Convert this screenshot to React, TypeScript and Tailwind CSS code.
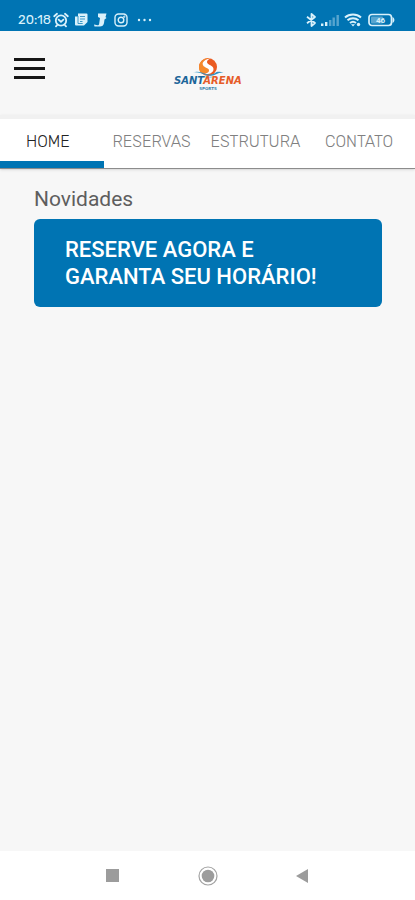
import React, { useState } from 'react'

const tabs = ['HOME', 'RESERVAS', 'ESTRUTURA', 'CONTATO']

function StatusBar() {
  return (
    <div className="flex h-[31px] items-center justify-between bg-[#0074b3] pt-2 pr-5 pl-[18px] text-[#d9f1fb]">
      <div className="flex items-center">
        <span className="font-['Rubik','Roboto',sans-serif] text-[13px] leading-4">20:18</span>
        <svg className="ml-[2px] h-4 w-4" viewBox="0 0 16 16" fill="none" stroke="currentColor" strokeWidth="1.8" strokeLinecap="round">
          <circle cx="8" cy="8.5" r="5.2" />
          <path d="M1.2 4.2 4 1.8M14.8 4.2 12 1.8M4.2 13 3 14.4M11.8 13l1.2 1.4M5.6 7.6 8 9.8l2.4-2.2" />
        </svg>
        <svg className="ml-1 h-4 w-4" viewBox="0 0 16 16">
          <path d="M5 1.5h8.500a1 1 0 0 1 1 1v7.500l-3.500 3.500H3a1 1 0 0 1-1-1v-8h3z" fill="currentColor" />
          <path d="M5 4v7.500h4.700M7 4.500h5M7 7h5M7 9.500h2.500" stroke="#2b8fc2" strokeWidth="0.9" fill="none" />
        </svg>
        <svg className="ml-1 h-4 w-4" viewBox="0 0 16 16" fill="currentColor">
          <path d="M5 1.500h8.500L12.500 5l1 1-2 1.500-.5 3.500c-.3 2.500-2 3.500-4 3.500L1.500 14.500l-.5-2 3.500.8c1.200 0 1.700-.8 1.700-1.800L7 6 5 5z" />
        </svg>
        <svg className="ml-1 h-4 w-4" viewBox="0 0 16 16" fill="none" stroke="currentColor" strokeWidth="1.4">
          <rect x="2" y="2" width="12" height="12" rx="3.5" />
          <circle cx="8" cy="8" r="2.8" />
          <circle cx="11.3" cy="4.7" r="0.4" />
        </svg>
        <svg className="ml-2 h-4 w-4" viewBox="0 0 16 16" fill="currentColor">
          <circle cx="2" cy="8" r="1.2" />
          <circle cx="7.500" cy="8" r="1.2" />
          <circle cx="13" cy="8" r="1.2" />
        </svg>
      </div>
      <div className="flex items-center">
        <svg className="h-4 w-4" viewBox="0 0 16 16" fill="none" stroke="currentColor" strokeWidth="1.8" strokeLinejoin="round">
          <path d="m3 4.800 8 6.200L7.500 14V2L11 5 3 11.200" />
        </svg>
        <svg className="h-4 w-5" viewBox="0 0 20 16" fill="currentColor">
          <rect x="1" y="11.500" width="2.400" height="2.500" />
          <rect x="5" y="10" width="2.400" height="4" />
          <path d="M9 8h2.400v6H9zM12.500 5.500h2.400V14h-2.400zM16.500 3h2.400v11h-2.400z" opacity="0.4" />
        </svg>
        <svg className="ml-1 h-4 w-[18px]" viewBox="0 0 18 16" fill="none" stroke="currentColor" strokeWidth="2">
          <path d="M1 5.500c4.500-4 11.500-4 16 0M3.500 8.300c3.200-2.800 7.800-2.800 11 0M6 11c1.800-1.500 4.200-1.500 6 0" />
          <path d="m9 14.500-2-2.300h4z" fill="currentColor" stroke="none" />
          <circle cx="14.500" cy="12.500" r="1.700" fill="currentColor" stroke="none" />
        </svg>
        <svg className="ml-[6px] h-4 w-[27px]" viewBox="0 0 27 16">
          <rect x="1" y="2.500" width="22.500" height="11" rx="3" fill="none" stroke="currentColor" strokeWidth="1.7" />
          <path d="M24.500 5c2.500 1 2.500 5 0 6z" fill="currentColor" />
          <rect x="3" y="4.500" width="12" height="7" rx="1" fill="currentColor" opacity="0.4" />
          <text x="12.500" y="10.800" fontSize="8" fontWeight="700" textAnchor="middle" fill="currentColor" fontFamily="Roboto, sans-serif">46</text>
        </svg>
      </div>
    </div>
  )
}

function Logo() {
  return (
    <svg className="h-12 w-20" viewBox="0 -12 80 48" role="img" aria-label="Santarena Sports">
      <circle cx="40" cy="11" r="9" fill="#ea5b22" />
      <path d="M42 2c-6-.5-11 4-11 9 0 2 .5 4 1.500 5.500 4 1.500 8 .5 8.500-2 .5-2.700-5-2.700-6-5.500-1-3 2.500-6 7-7z" fill="#f58a2c" />
      <path d="M43 2.300c-6 .7-9.500 4-8 7 1.300 2.800 6.500 2.500 6 5.500-.3 1.800-2.500 2.700-5 3.200 5 .8 9.500-1 9.500-5 0-3.800-6-3.700-6.500-6.700-.2-1.700 1.500-3 4-4z" fill="#fff" />
      <path d="M25 16.500c5-2 9 .5 13 1.500s7 .5 9-1 4-1.500 8.500-.5c-3.500.2-5.500.7-8 2-3 1.600-6.500 1.500-10.500.3-4-1.400-7-3-12-2.300z" fill="#2f93c6" />
      <path d="M32 20.500c4-.5 7 1.500 12 .5" stroke="#7cc0de" fill="none" />
      <text x="6" y="28" fontSize="10" fontWeight="700" fontStyle="italic" fontFamily="'DejaVu Sans', sans-serif" fill="#1d669a">
        SANT<tspan fill="#e65c29">ARENA</tspan>
      </text>
      <text x="40" y="34" fontSize="4" fontWeight="700" textAnchor="middle" fontFamily="'DejaVu Sans', sans-serif" fill="#3b86ae">SPORTS</text>
    </svg>
  )
}

function Header() {
  return (
    <header className="grid h-[84px] grid-cols-[1fr_auto_1fr] items-center px-[14px] pb-[10px]">
      <button type="button" aria-label="Menu" className="flex w-[31px] flex-col gap-[6px]">
        <span className="h-[3px] bg-[#161616]" />
        <span className="h-[3px] bg-[#161616]" />
        <span className="h-[3px] bg-[#161616]" />
      </button>
      <Logo />
    </header>
  )
}

export default function App() {
  const [active, setActive] = useState('HOME')

  return (
    <div className="flex min-h-screen flex-col bg-[#f7f7f7] font-['Rubik','Roboto',sans-serif]">
      <StatusBar />
      <Header />
      <nav className="grid h-[54px] grid-cols-4 border-t-4 border-b border-t-[#f1f1f1] border-b-[#8c8c8c] bg-white shadow-sm">
        {tabs.map(tab => (
          <button
            key={tab}
            type="button"
            onClick={() => setActive(tab)}
            className={`border-b-[7px] pt-1 pr-2 text-base leading-5 font-light ${
              active === tab ? 'border-[#0074b3] text-[#222222]' : 'border-transparent text-[#808080]'
            }`}
          >
            {tab}
          </button>
        ))}
      </nav>

      <main className="flex-1 pt-4 pr-[33px] pl-[34px] font-['Roboto',sans-serif]">
        <h2 className="text-[21px] leading-7 text-[#5e5e5e]">Novidades</h2>
        <a href="#reservas" className="mt-[6px] block rounded-md bg-[#0074b3] px-[31px] py-[17px] text-[22px] leading-[27px] font-medium text-white">
          RESERVE AGORA E<br />GARANTA SEU HORÁRIO!
        </a>
      </main>

      <footer className="flex h-[49px] items-center justify-center gap-[75px] bg-white">
        <button type="button" aria-label="Recentes">
          <svg className="h-5 w-5" viewBox="0 0 20 20" fill="#9c9c9c"><rect x="3" y="3" width="13" height="13" /></svg>
        </button>
        <button type="button" aria-label="Início">
          <svg className="h-5 w-5" viewBox="0 0 20 20">
            <circle cx="10" cy="10" r="9" fill="none" stroke="#a3a3a3" strokeWidth="1.2" />
            <circle cx="10" cy="10" r="6.3" fill="#9c9c9c" />
          </svg>
        </button>
        <button type="button" aria-label="Voltar">
          <svg className="h-5 w-5" viewBox="0 0 20 20" fill="#9c9c9c"><path d="M3 10 15 3v14z" /></svg>
        </button>
      </footer>
    </div>
  )
}
